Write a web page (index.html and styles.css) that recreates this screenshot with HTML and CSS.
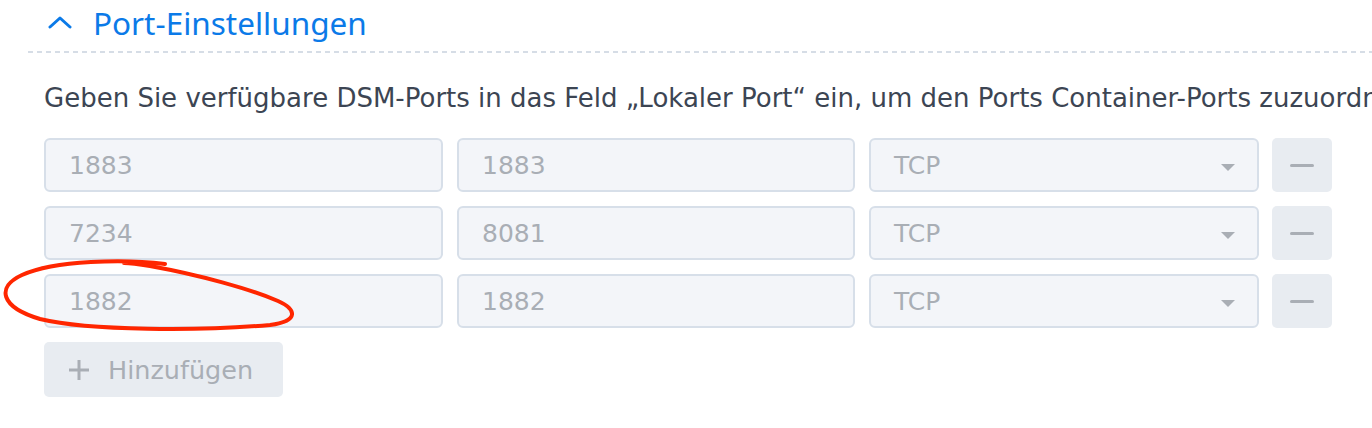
FILE: index.html
```html
<!DOCTYPE html>
<html lang="de">
<head>
<meta charset="utf-8">
<title>Port-Einstellungen</title>
<link rel="stylesheet" href="styles.css">
</head>
<body>
<section class="panel">
  <header class="section-head">
    <svg class="chevron" width="24" height="14" viewBox="0 0 24 14"><path d="M2 12 L12 3 L22 12" fill="none" stroke="#0b7ae8" stroke-width="3" stroke-linecap="round" stroke-linejoin="round"/></svg>
    <h2 class="section-title">Port-Einstellungen</h2>
  </header>
  <div class="divider"></div>
  <p class="desc">Geben Sie verfügbare DSM-Ports in das Feld „Lokaler Port“ ein, um den Ports Container-Ports zuzuordnen.</p>
  <div class="rows">
    <div class="row">
      <div class="field">1883</div>
      <div class="field">1883</div>
      <div class="field select">TCP<span class="caret"></span></div>
      <button class="remove"><span class="minus"></span></button>
    </div>
    <div class="row">
      <div class="field">7234</div>
      <div class="field">8081</div>
      <div class="field select">TCP<span class="caret"></span></div>
      <button class="remove"><span class="minus"></span></button>
    </div>
    <div class="row">
      <div class="field">1882</div>
      <div class="field">1882</div>
      <div class="field select">TCP<span class="caret"></span></div>
      <button class="remove"><span class="minus"></span></button>
    </div>
  </div>
  <button class="add"><svg width="22" height="22" viewBox="0 0 22 22"><path d="M11 1 V21 M1 11 H21" stroke="#a9aeb5" stroke-width="3"/></svg><span>Hinzufügen</span></button>
  <svg class="annotation" width="310" height="90" viewBox="0 0 310 90"><path d="M165 7 C125 2, 55 3, 22 18 C-4 30, 0 50, 40 62 C90 74, 200 74, 270 68 C300 64, 296 52, 278 44 C250 32, 200 18, 150 9 C138 7, 130 6, 124 6" fill="none" stroke="#ff2600" stroke-width="4" stroke-linecap="round"/></svg>
</section>
</body>
</html>
```

FILE: styles.css
```css
* { box-sizing: border-box; }
html, body { margin: 0; padding: 0; background: #fff; }
body { width: 1372px; height: 428px; overflow: hidden; font-family: "DejaVu Sans", Verdana, sans-serif; }

.panel { position: relative; padding: 0 0 0 44px; }

.section-head { display: flex; align-items: center; height: 46px; margin-left: 4px; }
.chevron { margin-right: 21px; margin-top: -2px; }
.section-title { margin: 0; font-family: "Noto Sans", "Open Sans", sans-serif; font-weight: 400; font-size: 31.5px; line-height: 40px; color: #0b7ae8; }

.divider { margin-left: -16px; height: 2px; margin-top: 5px; background: repeating-linear-gradient(90deg, #d6dde6 0 5px, transparent 5px 9px); }

.desc { margin: 30px 0 0; font-size: 26px; color: #3c4553; white-space: nowrap; line-height: 30px; }

.rows { display: flex; flex-direction: column; gap: 14px; margin-top: 25px; }
.row { display: grid; grid-template-columns: 399px 398px 390px 60px; column-gap: 14px; height: 54px; }
.row .remove { margin-left: -1px; }

.field { display: flex; align-items: center; height: 54px; padding-left: 23px; background: #f3f5f9; border: 2px solid #d7dfe9; border-radius: 6px; color: #a9aeb5; font-size: 25px; }
.select { position: relative; }
.caret { position: absolute; right: 22px; top: 24px; width: 0; height: 0; border-left: 7px solid transparent; border-right: 7px solid transparent; border-top: 7px solid #a9aeb5; }

.remove { display: flex; align-items: center; justify-content: center; height: 54px; width: 60px; border: none; border-radius: 5px; background: #e8ecf1; padding: 0; }
.minus { display: block; width: 24px; height: 3px; border-radius: 2px; background: #a9aeb5; }

.add { display: flex; align-items: center; gap: 18px; margin-top: 14px; height: 55px; width: 239px; padding: 0 0 0 24px; border: none; border-radius: 5px; background: #e8ecf1; color: #a9aeb5; font-family: "DejaVu Sans", Verdana, sans-serif; font-size: 25.5px; }

.annotation { position: absolute; left: 0; top: 257px; pointer-events: none; }
```
